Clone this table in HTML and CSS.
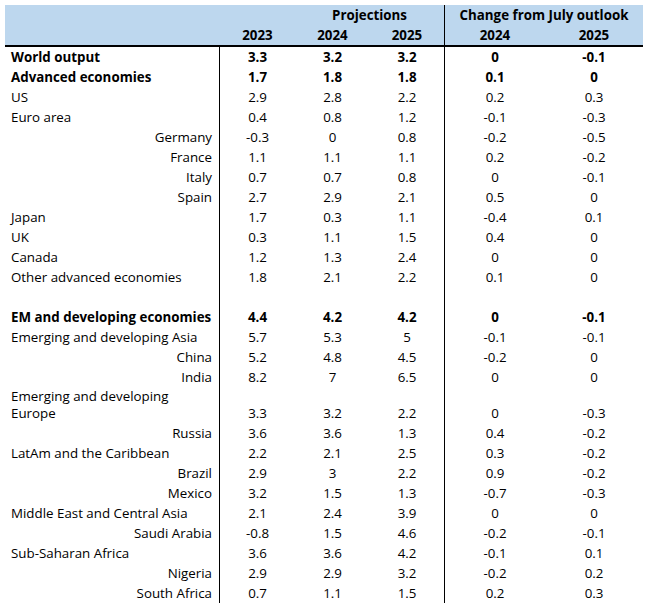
FILE: index.html
```html
<!DOCTYPE html>
<html lang="en">
<head>
<meta charset="utf-8">
<title>World Economic Outlook projections</title>
<link rel="stylesheet" href="styles.css">
</head>
<body>
<table class="outlook">
  <colgroup>
    <col class="c-label">
    <col class="c-num">
    <col class="c-num">
    <col class="c-num">
    <col class="c-chg1">
    <col class="c-chg2">
  </colgroup>
  <thead>
    <tr class="h1">
      <th colspan="2"></th>
      <th colspan="2" class="sep">Projections</th>
      <th colspan="2">Change from July outlook</th>
    </tr>
    <tr class="h2">
      <th></th>
      <th>2023</th>
      <th>2024</th>
      <th class="sep">2025</th>
      <th>2024</th>
      <th>2025</th>
    </tr>
  </thead>
  <tbody>
    <tr class="b"><td class="lbl">World output</td><td>3.3</td><td>3.2</td><td class="sep">3.2</td><td>0</td><td>-0.1</td></tr>
    <tr class="b"><td class="lbl">Advanced economies</td><td>1.7</td><td>1.8</td><td class="sep">1.8</td><td>0.1</td><td>0</td></tr>
    <tr><td class="lbl">US</td><td>2.9</td><td>2.8</td><td class="sep">2.2</td><td>0.2</td><td>0.3</td></tr>
    <tr><td class="lbl">Euro area</td><td>0.4</td><td>0.8</td><td class="sep">1.2</td><td>-0.1</td><td>-0.3</td></tr>
    <tr><td class="lbl sub">Germany</td><td>-0.3</td><td>0</td><td class="sep">0.8</td><td>-0.2</td><td>-0.5</td></tr>
    <tr><td class="lbl sub">France</td><td>1.1</td><td>1.1</td><td class="sep">1.1</td><td>0.2</td><td>-0.2</td></tr>
    <tr><td class="lbl sub">Italy</td><td>0.7</td><td>0.7</td><td class="sep">0.8</td><td>0</td><td>-0.1</td></tr>
    <tr><td class="lbl sub">Spain</td><td>2.7</td><td>2.9</td><td class="sep">2.1</td><td>0.5</td><td>0</td></tr>
    <tr><td class="lbl">Japan</td><td>1.7</td><td>0.3</td><td class="sep">1.1</td><td>-0.4</td><td>0.1</td></tr>
    <tr><td class="lbl">UK</td><td>0.3</td><td>1.1</td><td class="sep">1.5</td><td>0.4</td><td>0</td></tr>
    <tr><td class="lbl">Canada</td><td>1.2</td><td>1.3</td><td class="sep">2.4</td><td>0</td><td>0</td></tr>
    <tr><td class="lbl">Other advanced economies</td><td>1.8</td><td>2.1</td><td class="sep">2.2</td><td>0.1</td><td>0</td></tr>
    <tr><td class="lbl"></td><td></td><td></td><td class="sep"></td><td></td><td></td></tr>
    <tr class="b"><td class="lbl">EM and developing economies</td><td>4.4</td><td>4.2</td><td class="sep">4.2</td><td>0</td><td>-0.1</td></tr>
    <tr><td class="lbl">Emerging and developing Asia</td><td>5.7</td><td>5.3</td><td class="sep">5</td><td>-0.1</td><td>-0.1</td></tr>
    <tr><td class="lbl sub">China</td><td>5.2</td><td>4.8</td><td class="sep">4.5</td><td>-0.2</td><td>0</td></tr>
    <tr><td class="lbl sub">India</td><td>8.2</td><td>7</td><td class="sep">6.5</td><td>0</td><td>0</td></tr>
    <tr class="wrap"><td class="lbl">Emerging and developing<br>Europe</td><td>3.3</td><td>3.2</td><td class="sep">2.2</td><td>0</td><td>-0.3</td></tr>
    <tr><td class="lbl sub">Russia</td><td>3.6</td><td>3.6</td><td class="sep">1.3</td><td>0.4</td><td>-0.2</td></tr>
    <tr><td class="lbl">LatAm and the Caribbean</td><td>2.2</td><td>2.1</td><td class="sep">2.5</td><td>0.3</td><td>-0.2</td></tr>
    <tr><td class="lbl sub">Brazil</td><td>2.9</td><td>3</td><td class="sep">2.2</td><td>0.9</td><td>-0.2</td></tr>
    <tr><td class="lbl sub">Mexico</td><td>3.2</td><td>1.5</td><td class="sep">1.3</td><td>-0.7</td><td>-0.3</td></tr>
    <tr><td class="lbl">Middle East and Central Asia</td><td>2.1</td><td>2.4</td><td class="sep">3.9</td><td>0</td><td>0</td></tr>
    <tr><td class="lbl sub">Saudi Arabia</td><td>-0.8</td><td>1.5</td><td class="sep">4.6</td><td>-0.2</td><td>-0.1</td></tr>
    <tr><td class="lbl">Sub-Saharan Africa</td><td>3.6</td><td>3.6</td><td class="sep">4.2</td><td>-0.1</td><td>0.1</td></tr>
    <tr><td class="lbl sub">Nigeria</td><td>2.9</td><td>2.9</td><td class="sep">3.2</td><td>-0.2</td><td>0.2</td></tr>
    <tr><td class="lbl sub">South Africa</td><td>0.7</td><td>1.1</td><td class="sep">1.5</td><td>0.2</td><td>0.3</td></tr>
  </tbody>
</table>
</body>
</html>
```

FILE: styles.css
```css
html, body {
  margin: 0;
  padding: 0;
  background: #ffffff;
}

body {
  padding: 5px;
  font-family: "Open Sans", "Noto Sans", "DejaVu Sans", sans-serif;
  font-size: 13.333px;
  color: #000000;
}

.outlook {
  table-layout: fixed;
  width: 638px;
  border-collapse: separate;
  border-spacing: 0;
  line-height: 17px;
}

.c-label { width: 215px; }
.c-num { width: 75px; }
.c-chg1 { width: 100px; }
.c-chg2 { width: 98px; }

.outlook th,
.outlook td {
  padding: 0 2px 1px 2px;
  vertical-align: bottom;
  text-align: center;
  white-space: nowrap;
}

.outlook thead th {
  background: #bdd7ee;
  font-weight: 700;
}

.outlook .h1 { height: 20px; }

.outlook .h2 { height: 22px; }

.outlook .h2 th {
  border-bottom: 2px solid #000000;
}

.outlook tbody tr { height: 20px; }

.outlook tbody tr.wrap { height: 36px; }

.outlook .sep {
  border-right: 1px solid #000000;
}

.outlook td.lbl {
  text-align: left;
  padding-left: 6px;
  padding-right: 7px;
  border-right: 1px solid #000000;
}

.outlook td.sub {
  text-align: right;
}

.outlook tr.b td {
  font-weight: 700;
}
```
